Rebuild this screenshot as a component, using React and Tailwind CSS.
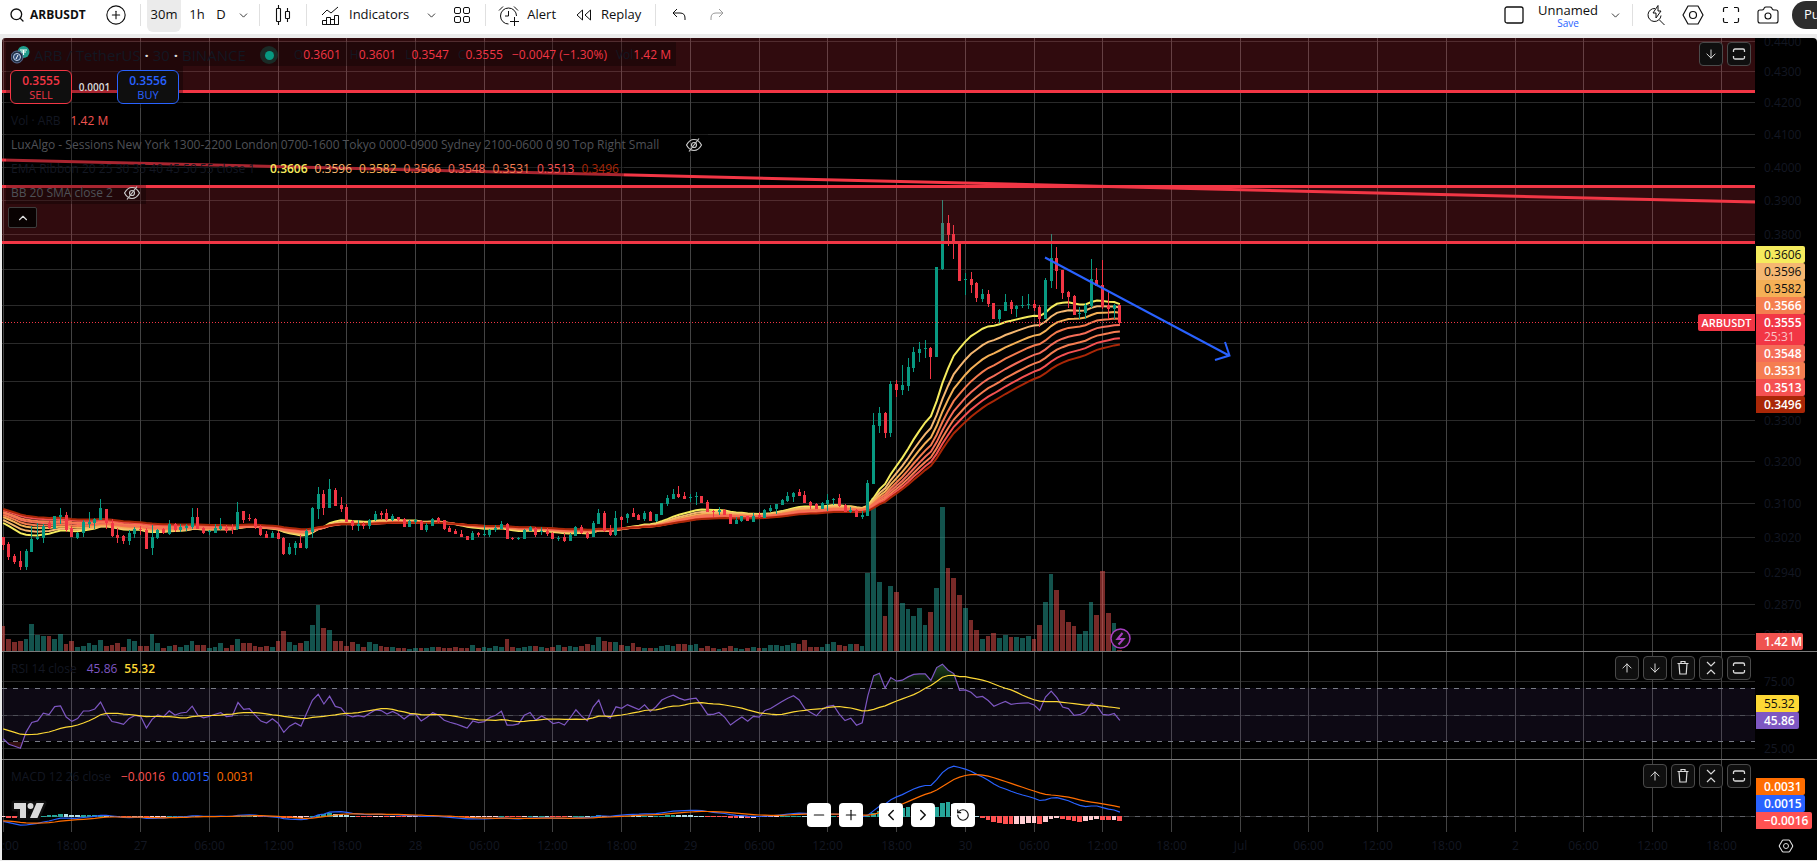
import React from "react";
import {
  Search,
  CirclePlus,
  ChevronDown,
  ChevronUp,
  ChevronLeft,
  ChevronRight,
  ArrowUp,
  ArrowDown,
  Minus,
  Plus,
  RotateCcw,
  Hexagon,
  Camera,
} from "lucide-react";

// one bar per 30m: [up, high, bodyTop, bodyBottom, low, volume], all in pixels
const BARS = [
  [0, 537, 537, 545, 550, 25], [0, 542, 544, 557, 560, 12], [0, 554, 556, 562, 564, 9], [0, 551, 561, 567, 570, 10],
  [1, 549, 551, 567, 570, 12], [1, 526, 539, 552, 552, 27], [1, 523, 537, 539, 540, 16], [1, 524, 526, 538, 543, 15],
  [0, 521, 523, 528, 529, 15], [1, 516, 516, 529, 529, 12], [1, 508, 515, 517, 524, 17], [0, 512, 515, 530, 532, 7],
  [0, 526, 528, 537, 537, 10], [1, 532, 533, 538, 539, 4], [1, 520, 522, 533, 537, 5], [1, 512, 522, 524, 528, 8],
  [1, 518, 519, 523, 529, 6], [1, 499, 508, 520, 520, 11], [0, 509, 509, 523, 529, 5], [0, 519, 523, 536, 537, 6],
  [0, 528, 535, 538, 543, 8], [0, 535, 536, 541, 544, 4], [1, 530, 533, 541, 545, 12], [1, 527, 529, 534, 538, 10],
  [0, 526, 529, 530, 535, 5], [0, 528, 530, 549, 549, 5], [1, 525, 537, 548, 555, 17], [1, 529, 530, 538, 539, 8],
  [0, 528, 529, 533, 534, 3], [1, 520, 524, 534, 535, 5], [0, 523, 524, 530, 532, 6], [1, 524, 527, 530, 532, 4],
  [1, 524, 526, 528, 531, 6], [1, 508, 517, 527, 529, 10], [0, 508, 517, 529, 529, 6], [0, 527, 528, 533, 534, 6],
  [1, 530, 531, 532, 535, 3], [1, 524, 528, 533, 533, 4], [1, 518, 526, 529, 530, 8], [0, 525, 528, 531, 533, 3],
  [0, 524, 529, 530, 534, 6], [1, 502, 512, 529, 530, 12], [0, 511, 511, 520, 523, 8], [0, 514, 518, 519, 521, 8],
  [0, 518, 519, 527, 529, 5], [0, 525, 527, 535, 536, 4], [0, 531, 534, 538, 538, 5], [1, 531, 533, 538, 538, 4],
  [0, 531, 533, 539, 539, 10], [0, 537, 538, 554, 555, 20], [1, 543, 547, 554, 555, 9], [1, 541, 543, 548, 555, 6],
  [0, 535, 543, 548, 548, 8], [1, 529, 531, 548, 549, 10], [1, 507, 508, 532, 538, 26], [1, 487, 494, 509, 519, 46],
  [0, 490, 494, 508, 515, 23], [1, 479, 489, 508, 508, 21], [0, 488, 490, 506, 506, 10], [0, 497, 505, 509, 512, 10],
  [0, 504, 507, 522, 522, 5], [0, 520, 521, 526, 530, 9], [1, 520, 524, 526, 531, 7], [0, 522, 524, 526, 529, 4],
  [1, 519, 520, 526, 529, 9], [1, 511, 514, 520, 521, 7], [0, 511, 513, 515, 520, 5], [0, 509, 513, 520, 521, 4],
  [1, 514, 516, 520, 521, 4], [0, 517, 517, 520, 521, 3], [0, 518, 519, 527, 527, 3], [1, 520, 521, 527, 527, 2],
  [1, 519, 520, 522, 524, 3], [0, 520, 521, 530, 530, 3], [1, 523, 525, 530, 532, 3], [1, 518, 519, 526, 526, 4],
  [0, 517, 518, 522, 523, 4], [0, 520, 520, 529, 530, 3], [0, 526, 528, 532, 532, 3], [0, 529, 531, 534, 534, 4],
  [0, 530, 534, 537, 537, 3], [0, 536, 536, 540, 540, 3], [1, 531, 533, 540, 540, 6], [0, 532, 533, 535, 537, 3],
  [1, 525, 534, 535, 536, 4], [1, 529, 530, 535, 537, 3], [1, 525, 528, 530, 532, 5], [1, 521, 524, 529, 529, 4],
  [0, 523, 524, 539, 539, 12], [0, 537, 538, 539, 540, 4], [1, 537, 538, 539, 540, 3], [1, 529, 530, 539, 539, 4],
  [1, 526, 527, 531, 531, 5], [0, 527, 528, 535, 537, 5], [1, 527, 531, 532, 535, 4], [0, 528, 531, 534, 536, 3],
  [0, 532, 533, 539, 539, 4], [1, 536, 538, 539, 541, 6], [0, 533, 537, 541, 542, 4], [1, 533, 535, 541, 541, 5],
  [1, 526, 527, 536, 536, 4], [0, 525, 527, 533, 534, 5], [0, 532, 533, 538, 539, 7], [1, 521, 523, 537, 537, 6],
  [1, 509, 513, 524, 524, 14], [0, 511, 513, 531, 532, 10], [0, 525, 530, 535, 536, 9], [1, 511, 518, 535, 536, 9],
  [0, 516, 517, 520, 529, 6], [1, 513, 514, 518, 523, 5], [0, 508, 513, 517, 517, 8], [0, 514, 515, 520, 520, 4],
  [1, 511, 513, 519, 521, 3], [0, 511, 512, 521, 521, 3], [1, 514, 514, 521, 522, 3], [1, 503, 503, 515, 515, 5],
  [1, 495, 498, 504, 506, 6], [1, 489, 494, 499, 499, 5], [0, 486, 494, 497, 498, 7], [0, 492, 496, 499, 499, 7],
  [1, 494, 497, 498, 502, 6], [1, 492, 496, 497, 505, 7], [0, 496, 496, 503, 503, 3], [0, 500, 502, 512, 512, 5],
  [0, 510, 511, 512, 517, 3], [1, 507, 510, 512, 515, 2], [0, 509, 510, 515, 515, 3], [0, 514, 514, 524, 524, 5],
  [1, 517, 520, 524, 524, 3], [1, 516, 516, 521, 522, 2], [0, 516, 516, 521, 521, 3], [1, 513, 516, 522, 522, 4],
  [0, 512, 515, 517, 518, 3], [1, 509, 510, 518, 518, 3], [1, 505, 508, 511, 512, 6], [1, 504, 504, 509, 514, 6],
  [1, 499, 500, 505, 505, 5], [1, 492, 496, 501, 502, 6], [1, 492, 493, 497, 502, 8], [0, 489, 492, 496, 496, 7],
  [0, 491, 495, 503, 503, 11], [0, 501, 502, 506, 509, 4], [0, 503, 504, 509, 509, 4], [1, 502, 503, 509, 509, 4],
  [1, 494, 500, 504, 511, 7], [1, 498, 499, 500, 505, 9], [0, 494, 498, 506, 507, 6], [0, 504, 505, 512, 512, 5],
  [1, 507, 510, 512, 513, 7], [0, 509, 510, 517, 517, 7], [1, 511, 515, 517, 519, 5], [1, 480, 483, 516, 516, 78],
  [1, 413, 425, 484, 484, 153], [1, 407, 413, 426, 433, 69], [0, 412, 413, 433, 438, 35], [1, 381, 384, 433, 437, 65],
  [0, 380, 384, 390, 397, 59], [1, 365, 385, 390, 395, 48], [1, 358, 367, 386, 391, 42], [1, 347, 352, 368, 372, 35],
  [1, 342, 349, 353, 362, 43], [1, 340, 348, 349, 358, 26], [0, 347, 348, 357, 379, 39], [1, 267, 267, 357, 357, 63],
  [1, 200, 223, 269, 270, 144], [0, 215, 223, 235, 246, 83], [0, 225, 234, 242, 259, 73], [0, 242, 243, 281, 281, 56],
  [1, 273, 279, 280, 295, 43], [0, 272, 279, 285, 293, 31], [0, 282, 283, 298, 302, 21], [1, 289, 294, 299, 302, 12],
  [0, 290, 294, 304, 307, 15], [0, 303, 303, 319, 319, 18], [1, 309, 310, 319, 323, 13], [1, 294, 302, 311, 311, 16],
  [0, 300, 302, 309, 314, 14], [1, 305, 306, 309, 317, 14], [1, 296, 305, 306, 308, 13], [1, 294, 304, 305, 309, 15],
  [0, 300, 304, 308, 311, 12], [0, 305, 307, 319, 327, 26], [1, 278, 280, 319, 319, 49], [1, 234, 258, 281, 288, 77],
  [0, 247, 258, 271, 289, 61], [0, 270, 270, 293, 299, 41], [0, 291, 292, 297, 308, 29], [0, 295, 296, 315, 315, 25],
  [1, 307, 313, 314, 319, 17], [1, 303, 305, 313, 319, 20], [1, 259, 279, 306, 308, 49], [0, 268, 280, 286, 286, 36],
  [0, 260, 285, 307, 309, 80], [0, 291, 305, 309, 319, 38], [1, 304, 305, 309, 319, 28], [0, 305, 305, 323, 324, 1],
];

const STEP = 5.7267;
const barX = (i) => 1.2 + i * STEP;
const pixelX = (i) => Math.floor(barX(i));

// the price scale is logarithmic
const toPrice = (y) => 0.31 * Math.exp((503.5 - y) / 1319);
const toY = (p) => 503.5 - 1319 * Math.log(p / 0.31);
const closes = BARS.map(([up, , top, bottom]) => toPrice(up ? top : bottom));

const ema = (values, period, seed) => {
  const k = 2 / (period + 1);
  let prev = seed;
  return values.map((v, i) => {
    if (i > 0) prev = v * k + prev * (1 - k);
    return prev;
  });
};

const points = (values, scale) =>
  values.map((v, i) => `${barX(i).toFixed(1)},${scale(v).toFixed(1)}`).join(" ");

const RIBBON = [
  { period: 20, seed: 523, color: "#f5eb5d" },
  { period: 25, seed: 520, color: "#f5b771" },
  { period: 30, seed: 517, color: "#f5b056" },
  { period: 35, seed: 515, color: "#f57b4e" },
  { period: 40, seed: 513, color: "#f56d58" },
  { period: 45, seed: 512, color: "#f57d51" },
  { period: 50, seed: 510, color: "#f55151" },
  { period: 55, seed: 509, color: "#aa2707" },
];
const ribbonLines = RIBBON.map((r) => ({
  color: r.color,
  points: points(ema(closes, r.period, toPrice(r.seed)), toY),
}));

// RSI 14 with Wilder smoothing
const rsi = (() => {
  let gain = 0.00045;
  let loss = 0.00095;
  return closes.map((c, i) => {
    if (i > 0) {
      const diff = c - closes[i - 1];
      gain = (gain * 13 + Math.max(diff, 0)) / 14;
      loss = (loss * 13 + Math.max(-diff, 0)) / 14;
    }
    return 100 - 100 / (1 + gain / loss);
  });
})();
const rsiHistory = [46, 45, 44, 43, 42, 41, 40, 40, 38, 37, 36, 35, 34];
const rsiMa = rsi.map((_, i) => {
  const all = [...rsiHistory, ...rsi];
  return all.slice(i, i + 14).reduce((a, b) => a + b, 0) / 14;
});
const rsiY = (v) => 688.5 + (70 - v) * 1.325;

const MACD_SCALE = 3050;
const fast = ema(closes, 12, 0.3046);
const slow = ema(closes, 26, 0.3062);
const macd = fast.map((v, i) => v - slow[i]);
const signal = ema(macd, 9, -0.0014);
const histogram = macd.map((v, i) => v - signal[i]);
const macdY = (v) => 816.5 - v * MACD_SCALE;

const histColor = (i) => {
  const v = histogram[i];
  const prev = i > 0 ? histogram[i - 1] : v;
  if (v >= 0) return v >= prev ? "#26a69a" : "#b2dfe8";
  return v < prev ? "#ff5252" : "#ffcdd2";
};

const GRID_Y = [41, 71, 102, 134, 167, 200, 234, 269, 305, 343, 381, 420, 461, 503, 537, 572, 604, 634];
const TIMES = [
  "12:00", "18:00", "27", "06:00", "12:00", "18:00", "28", "06:00", "12:00", "18:00", "29", "06:00", "12:00",
  "18:00", "30", "06:00", "12:00", "18:00", "Jul", "06:00", "12:00", "18:00", "2", "06:00", "12:00", "18:00",
];
const PRICE_TICKS = [
  [41, "0.4400"], [71, "0.4300"], [102, "0.4200"], [134, "0.4100"], [167, "0.4000"], [200, "0.3900"],
  [234, "0.3800"], [420, "0.3300"], [461, "0.3200"], [503, "0.3100"], [537, "0.3020"], [572, "0.2940"],
  [604, "0.2870"], [634, "0.2805"],
];

const gridX = (i) => pixelX(i * 12) + 0.5;

const VerticalGrid = () =>
  TIMES.map((_, i) => (
    <line key={i} x1={gridX(i)} x2={gridX(i)} y1="0" y2="900" stroke="#434343" />
  ));

const HLine = ({ y, stroke = "#2a2a2a", ...rest }) => (
  <line x1="0" x2="100%" y1={y + 0.5} y2={y + 0.5} stroke={stroke} {...rest} />
);

const Icon = ({ size = 18, className = "", children }) => (
  <svg
    width={size}
    height={size}
    viewBox={`0 0 ${size} ${size}`}
    fill="none"
    stroke="currentColor"
    className={`shrink-0 ${className}`}
    aria-hidden
  >
    {children}
  </svg>
);

const Divider = ({ className = "" }) => (
  <span className={`h-[22px] w-px shrink-0 bg-[#e0e0e0] ${className}`} />
);

const ToolButton = ({ label, className = "", children }) => (
  <button
    type="button"
    aria-label={label}
    className={`flex shrink-0 items-center justify-center ${className}`}
  >
    {children}
  </button>
);

const Toolbar = () => (
  <header className="flex h-[34px] items-center overflow-hidden bg-white pb-1 text-[13px] text-[#0f0f0f]">
    <button type="button" className="ml-[9px] flex items-center gap-[5px] font-bold">
      <Search size={16} strokeWidth={2} />
      <span className="w-[58px] text-left text-xs whitespace-nowrap">ARBUSDT</span>
    </button>
    <ToolButton label="Compare" className="ml-4 w-6">
      <CirclePlus size={22} strokeWidth={1.2} />
    </ToolButton>
    <Divider className="ml-3" />
    <button type="button" className="ml-1.5 h-8 w-[34px] self-start rounded-b-md bg-[#ebebeb] pb-0.5 text-center">
      30m
    </button>
    <button type="button" className="w-8 text-center">1h</button>
    <button type="button" className="w-4 text-center">D</button>
    <ToolButton label="Intervals" className="ml-1.5 w-4">
      <ChevronDown size={13} strokeWidth={1.5} />
    </ToolButton>
    <Divider className="ml-2" />
    <ToolButton label="Candles" className="ml-[15px] w-4">
      <Icon size={20}>
        <path d="M5.5 0v3M5.5 17v3M14.5 3v3M14.5 14v3" strokeWidth="1.1" />
        <rect x="3.5" y="3.5" width="4" height="13" rx="0.5" strokeWidth="1.1" />
        <rect x="12.5" y="6.5" width="4" height="7" rx="0.5" strokeWidth="1.1" />
      </Icon>
    </ToolButton>
    <Divider className="ml-[15px]" />
    <button type="button" className="ml-3.5 flex items-center gap-[9px]">
      <Icon size={19}>
        <path d="M1 9l5-5 4 3 7-6" />
        <path d="M1.5 18.5v-4h4v4zM5.5 18.5v-7h4v7M9.5 18.5v-5h4M13.5 18.5v-9h4v9zM1.5 18.5h16" />
      </Icon>
      Indicators
    </button>
    <ToolButton label="Favorite indicators" className="ml-3.5 w-4">
      <ChevronDown size={13} strokeWidth={1.5} />
    </ToolButton>
    <ToolButton label="Indicator templates" className="ml-3.5">
      <Icon size={18}>
        <rect x="1.5" y="1.5" width="6" height="6" rx="1.5" />
        <rect x="10.5" y="1.5" width="6" height="6" rx="1.5" />
        <rect x="1.5" y="10.5" width="6" height="6" rx="1.5" />
        <rect x="10.5" y="10.5" width="6" height="6" rx="1.5" />
      </Icon>
    </ToolButton>
    <Divider className="ml-3.5" />
    <button type="button" className="ml-3 flex items-center gap-2">
      <Icon size={21}>
        <path d="M18.5 11a8 8 0 1 0-8 8M1 5.5L5 1.5M16 1.5l4 4M10.5 6v5H7M16.5 12v9M12 16.5h9" />
      </Icon>
      Alert
    </button>
    <button type="button" className="ml-5 flex items-center gap-[9px]">
      <Icon size={16}>
        <path d="M6.5 3v10L1 8zM14.5 3v10L9 8z" strokeLinejoin="round" />
      </Icon>
      Replay
    </button>
    <Divider className="ml-3.5" />
    <ToolButton label="Undo" className="ml-4">
      <Icon size={14}>
        <path d="M5 1L1 5l4 4M1 5h7q5 0 5 5v2" />
      </Icon>
    </ToolButton>
    <ToolButton label="Redo" className="ml-6 text-[#9a9a9a]">
      <Icon size={14}>
        <path d="M9 1l4 4-4 4M13 5H6Q1 5 1 10v2" />
      </Icon>
    </ToolButton>

    <div className="ml-auto flex items-center">
      <ToolButton label="Layout setup">
        <Icon size={20}>
          <rect x="1" y="2" width="18" height="16" rx="2" strokeWidth="1.3" />
        </Icon>
      </ToolButton>
      <button type="button" className="ml-2 flex w-[72px] flex-col items-center">
        <span className="leading-4">Unnamed</span>
        <span className="text-[10px] leading-[10px] text-[#2962ff]">Save</span>
      </button>
      <ToolButton label="Manage layouts" className="ml-[3px] w-4">
        <ChevronDown size={13} strokeWidth={1.5} />
      </ToolButton>
      <Divider className="ml-[9px]" />
      <ToolButton label="Quick search" className="ml-3">
        <Icon size={21}>
          <path d="M10 3.500a6.500 6.500 0 1 0 6 7M14.500 15l5 5" />
          <path d="M13 .5L8 8h3v5l5-7h-3z" strokeLinejoin="round" />
        </Icon>
      </ToolButton>
      <ToolButton label="Settings" className="ml-4">
        <Icon size={22}>
          <path d="M6 2h10l5 9-5 9H6l-5-9z" strokeLinejoin="round" strokeWidth="1.2" />
          <circle cx="11" cy="11" r="3.5" strokeWidth="1.2" />
        </Icon>
      </ToolButton>
      <ToolButton label="Fullscreen mode" className="ml-[18px]">
        <Icon size={18}>
          <path d="M1.5 6V3q0-1.5 1.5-1.5h3M12 1.5h3q1.5 0 1.5 1.5v3M16.5 12v3q0 1.5-1.5 1.5h-3M6 16.5H3q-1.500 0-1.5-1.5v-3" strokeWidth="1.2" />
        </Icon>
      </ToolButton>
      <ToolButton label="Take a snapshot" className="ml-4">
        <Camera size={24} strokeWidth={1.1} />
      </ToolButton>
      <div className="ml-3 w-[25px] overflow-hidden">
        <button type="button" className="h-7 w-20 rounded-full bg-[#2e2e2e] pl-3 text-left text-white">
          Publish
        </button>
      </div>
    </div>
  </header>
);

const paneIcons = {
  up: ["Move pane up", <ArrowUp size={14} strokeWidth={1.7} />],
  down: ["Move pane down", <ArrowDown size={14} strokeWidth={1.7} />],
  remove: [
    "Delete pane",
    <Icon size={14}>
      <path d="M1.5 2.5h11M5 2.5v-2h4v2M3 2.5l.8 10.500h6.400L11 2.5" strokeWidth="1.2" />
    </Icon>,
  ],
  collapse: [
    "Collapse pane",
    <Icon size={14}>
      <path d="M3 1l4 4 4-4M3 13l4-4 4 4" strokeWidth="1.2" />
    </Icon>,
  ],
  maximize: [
    "Maximize pane",
    <Icon size={14}>
      <path d="M1.5 5V3.500q0-1.500 1.500-1.500h8q1.500 0 1.500 1.500V5M1.5 9v1.500Q1.500 12 3 12h8q1.500 0 1.500-1.500V9" strokeWidth="1.3" />
    </Icon>,
  ],
};

const PaneControls = ({ items }) => (
  <div className="absolute top-1 right-1 flex gap-1">
    {items.map((key) => (
      <button
        key={key}
        type="button"
        aria-label={paneIcons[key][0]}
        className="flex size-6 items-center justify-center rounded-sm border border-[#4a4a4a] bg-[#0f0f0f] text-[#dbdbdb]"
      >
        {paneIcons[key][1]}
      </button>
    ))}
  </div>
);

const EyeOff = () => (
  <svg width="18" height="14" viewBox="0 0 18 14" fill="none" stroke="#c8c8c8" strokeWidth="1.2">
    <path d="M1.5 7Q4.5 1.5 9 1.5T16.5 7Q13.5 12.5 9 12.5T1.5 7zM14 .5L4 13.5" />
    <circle cx="9" cy="7" r="2.5" />
  </svg>
);

const PriceTag = ({ bg, color = "text-white font-semibold", width = "w-[49px]", children }) => (
  <div className={`h-[17px] rounded-r-xs pl-2 text-xs leading-[17px] ${color} ${width}`} style={{ background: bg }}>
    {children}
  </div>
);

const Axis = ({ top, ticks, children }) => (
  <div className="relative w-[62px] shrink-0">
    <svg className="absolute inset-0 h-full w-full text-xs" fill="#131722">
      {ticks.map(([y, text]) => (
        <text key={text} x="9" y={y - top + 5}>
          {text}
        </text>
      ))}
    </svg>
    {children}
  </div>
);

const Legend = ({ name, children }) => (
  <div className="absolute top-1 left-1 flex h-6 items-center gap-[7px] pt-0.5 pl-[5px] text-xs text-[#131722]">
    <span className="mr-[3px]">{name}</span>
    {children}
  </div>
);

const legendRow = "flex h-6 w-fit items-center bg-black/30 px-[5px] pt-0.5 text-xs whitespace-nowrap";

const PricePane = () => (
  <section className="flex h-[613px]">
    <div className="relative min-w-0 flex-1 overflow-hidden">
      <svg className="block h-full w-full">
        <g transform="translate(0 -38)">
          {GRID_Y.map((y) => (
            <HLine key={y} y={y} />
          ))}
          <VerticalGrid />
          <g shapeRendering="crispEdges">
            {BARS.map(([up, , , , , vol], i) => (
              <rect
                key={i}
                x={pixelX(i) - 2}
                y={651 - vol}
                width={pixelX(i + 1) - pixelX(i) - 1}
                height={vol}
                fill={up ? "#26a69a" : "#ef5350"}
                fillOpacity="0.5"
              />
            ))}
          </g>
          {ribbonLines.map((line) => (
            <polyline key={line.color} points={line.points} fill="none" stroke={line.color} strokeWidth="2" />
          ))}
          <g shapeRendering="crispEdges">
            {BARS.map(([up, high, top, bottom, low], i) => (
              <g key={i} fill={up ? "#089981" : "#f23645"}>
                <rect x={pixelX(i)} y={high} width="1" height={Math.max(low - high, 1)} />
                <rect x={pixelX(i) - 1} y={top} width="3" height={Math.max(bottom - top, 1)} />
              </g>
            ))}
          </g>
          <rect x="0" y="38" width="100%" height="53" fill="#f23645" fillOpacity="0.2" />
          <rect x="0" y="186" width="100%" height="56" fill="#f23645" fillOpacity="0.2" />
          <g strokeWidth="3">
            <HLine y={91} stroke="#f23645" />
            <HLine y={186} stroke="#f23645" />
            <HLine y={242} stroke="#f23645" />
            <path d="M0 160L1753 202" stroke="#f23645" />
          </g>
          <HLine y={322} stroke="#f23645" strokeDasharray="1 2" />
          <path
            d="M1043 257.5L1227 355.5M1213 360l14.5-4.5L1223 342"
            stroke="#2962ff"
            strokeWidth="2"
            fill="none"
          />
          <g stroke="#a83fc0" strokeWidth="1.5">
            <circle cx="1118.5" cy="638.5" r="9.5" fill="#0f0f0f" />
            <path d="M1120.5 633l-5 6h6l-5 5.5" fill="none" strokeWidth="2" />
          </g>
        </g>
      </svg>

      <div className="absolute top-1 left-1">
        <div className={legendRow}>
          <svg width="20" height="20" viewBox="0 0 20 20" className="mr-[3px]">
            <circle cx="12.5" cy="7" r="6" fill="#1f9c8b" />
            <path d="M9 5h7M12.5 5v5M10 7h5" stroke="#fff" strokeWidth="1.2" />
            <circle cx="6" cy="12" r="6" fill="#213147" stroke="#5b6c92" />
            <circle cx="6" cy="12" r="3.5" fill="#2d4a75" stroke="#c4d4ee" />
            <path d="M5 14l2-4" stroke="#fff" />
          </svg>
          <span className="w-[211px] text-[15px] text-[#131722]">
            ARB / TetherUS <b className="text-[#dbdbdb]">·</b> 30 <b className="text-[#dbdbdb]">·</b> BINANCE
          </span>
          <span className="mr-4 ml-[15px] flex size-[18px] items-center justify-center rounded-full bg-[#089981]/25">
            <span className="size-[9px] rounded-full bg-[#089981]" />
          </span>
          <span className="flex gap-[9px] text-[#131722]">
            <span>O<span className="text-[#f23645]">0.3601</span></span>
            <span>H<span className="text-[#f23645]">0.3601</span></span>
            <span>L<span className="text-[#f23645]">0.3547</span></span>
            <span>C<span className="text-[#f23645]">0.3555</span></span>
            <span className="text-[#f23645]">−0.0047 (−1.30%)</span>
            <span>Vol<span className="text-[#f23645]">1.42 M</span></span>
          </span>
        </div>
        <div className="flex h-[42px] w-[177px] items-center bg-black/30 px-1">
          <button type="button" className="flex h-[34px] w-[62px] flex-col items-center justify-center rounded-md border border-[#f23645] bg-[#0f0f0f] text-[#f23645]">
            <span className="text-xs leading-[15px] font-semibold">0.3555</span>
            <span className="text-[11px] leading-[13px]">SELL</span>
          </button>
          <span className="w-[45px] text-center text-[10px] font-semibold text-[#dbdbdb]">0.0001</span>
          <button type="button" className="flex h-[34px] w-[62px] flex-col items-center justify-center rounded-md border border-[#2962ff] bg-[#0f0f0f] text-[#2962ff]">
            <span className="text-xs leading-[15px] font-semibold">0.3556</span>
            <span className="text-[11px] leading-[13px]">BUY</span>
          </button>
        </div>
        <div className={legendRow}>
          <span className="mr-2.5 text-[#131722]">Vol · ARB</span>
          <span className="text-[#ef5350]">1.42 M</span>
        </div>
        <div className={legendRow}>
          <span className="mr-2.5 w-[664px] text-[#4f5156]">
            LuxAlgo - Sessions New York 1300-2200 London 0700-1600 Tokyo 0000-0900 Sydney 2100-0600 0 90 Top Right Small
          </span>
          <EyeOff />
        </div>
        <div className={legendRow}>
          <span className="w-[259px] text-[#131722]">EMA Ribbon 20 25 30 35 40 45 50 55 close 1</span>
          <span className="flex gap-[7px]">
            {["0.3606", "0.3596", "0.3582", "0.3566", "0.3548", "0.3531", "0.3513", "0.3496"].map((v, i) => (
              <span key={v} className={i === 0 ? "font-semibold" : ""} style={{ color: RIBBON[i].color }}>
                {v}
              </span>
            ))}
          </span>
        </div>
        <div className={legendRow}>
          <span className="mr-2.5 text-[#4f5156]">BB 20 SMA close 2</span>
          <EyeOff />
        </div>
        <button
          type="button"
          aria-label="Hide indicators legend"
          className="mt-[3px] ml-0.5 flex h-[21px] w-[29px] items-center justify-center rounded-xs border border-[#3d3d3d] bg-black/80 text-[#dbdbdb]"
        >
          <ChevronUp size={14} strokeWidth={2} />
        </button>
      </div>

      <PaneControls items={["down", "maximize"]} />
      <div className="absolute top-[276px] right-0 h-[17px] w-[57px] rounded-l-xs bg-[#f23645] text-center text-[11px] leading-[17px] font-semibold text-white">
        ARBUSDT
      </div>
    </div>

    <Axis top={38} ticks={PRICE_TICKS}>
      <div className="absolute top-[208px] left-px">
        <PriceTag bg="#f5eb5d" color="text-[#0f0f0f]">0.3606</PriceTag>
        <PriceTag bg="#f5b771" color="text-[#0f0f0f]">0.3596</PriceTag>
        <PriceTag bg="#f5b056" color="text-[#0f0f0f]">0.3582</PriceTag>
        <PriceTag bg="#f57f4f">0.3566</PriceTag>
        <div className="h-[31px] w-[49px] rounded-r-xs bg-[#f23645] pl-2 text-xs text-white">
          <div className="leading-[17px] font-semibold">0.3555</div>
          <div className="leading-3 text-[#fbc3c7]">25:31</div>
        </div>
        <PriceTag bg="#f56d58">0.3548</PriceTag>
        <PriceTag bg="#f57d51">0.3531</PriceTag>
        <PriceTag bg="#f55151">0.3513</PriceTag>
        <PriceTag bg="#aa2707">0.3496</PriceTag>
      </div>
      <div className="absolute bottom-px left-px">
        <PriceTag bg="#ef5350" width="w-[47px]">1.42 M</PriceTag>
      </div>
    </Axis>
  </section>
);

const RsiPane = () => (
  <section className="flex h-[108px] border-t border-[#7b7b7b]">
    <div className="relative min-w-0 flex-1 overflow-hidden">
      <svg className="block h-full w-full">
        <defs>
          <clipPath id="overbought">
            <rect x="0" y="652" width="2000" height="36" />
          </clipPath>
          <clipPath id="oversold">
            <rect x="0" y="742" width="2000" height="20" />
          </clipPath>
          <linearGradient id="overboughtFill" x1="0" y1="652" x2="0" y2="688" gradientUnits="userSpaceOnUse">
            <stop offset="0" stopColor="#4caf50" stopOpacity="0.6" />
            <stop offset="1" stopColor="#4caf50" stopOpacity="0" />
          </linearGradient>
        </defs>
        <g transform="translate(0 -652)">
          <HLine y={681} />
          <HLine y={715} />
          <HLine y={748} />
          <VerticalGrid />
          <rect x="0" y="688" width="100%" height="53" fill="#7e57c2" fillOpacity="0.1" />
          <HLine y={688} stroke="#787b86" strokeDasharray="5 6" />
          <HLine y={715} stroke="#4d4f57" strokeDasharray="5 6" />
          <HLine y={741} stroke="#787b86" strokeDasharray="5 6" />
          <polygon
            points={`${barX(0)},688.5 ${points(rsi, rsiY)} ${barX(195)},688.5`}
            fill="url(#overboughtFill)"
            clipPath="url(#overbought)"
          />
          <polygon
            points={`${barX(0)},741.5 ${points(rsi, rsiY)} ${barX(195)},741.5`}
            fill="#ff5252"
            fillOpacity="0.2"
            clipPath="url(#oversold)"
          />
          <polyline points={points(rsi, rsiY)} fill="none" stroke="#7e57c2" strokeWidth="1.2" />
          <polyline points={points(rsiMa, rsiY)} fill="none" stroke="#fdd835" strokeWidth="1.2" />
        </g>
      </svg>
      <Legend name="RSI 14 close">
        <span className="text-[#7e57c2]">45.86</span>
        <span className="font-semibold text-[#fdd835]">55.32</span>
      </Legend>
      <PaneControls items={["up", "down", "remove", "collapse", "maximize"]} />
    </div>
    <Axis top={652} ticks={[[681, "75.00"], [748, "25.00"]]}>
      <div className="absolute top-[43px] left-px">
        <PriceTag bg="#fdd835" color="text-[#0f0f0f]" width="w-[43px]">55.32</PriceTag>
        <PriceTag bg="#7e57c2" width="w-[43px]">45.86</PriceTag>
      </div>
    </Axis>
  </section>
);

const NavButton = ({ label, className = "", children }) => (
  <button
    type="button"
    aria-label={label}
    className={`flex size-6 items-center justify-center rounded-sm bg-white ${className}`}
  >
    {children}
  </button>
);

const MacdPane = () => (
  <section className="flex h-[73px] border-t border-[#7b7b7b]">
    <div className="relative min-w-0 flex-1 overflow-hidden">
      <svg className="block h-full w-full">
        <g transform="translate(0 -760)">
          <VerticalGrid />
          <HLine y={816} />
          <HLine y={816} stroke="#5d5f66" strokeDasharray="5 6" />
          <g shapeRendering="crispEdges">
            {histogram.map((v, i) => {
              const height = Math.max(Math.round(Math.abs(v) * MACD_SCALE), 1);
              return (
                <rect
                  key={i}
                  x={pixelX(i) - 2}
                  y={v >= 0 ? 817 - height : 816}
                  width={pixelX(i + 1) - pixelX(i) - 1}
                  height={height}
                  fill={histColor(i)}
                />
              );
            })}
          </g>
          <polyline points={points(macd, macdY)} fill="none" stroke="#2962ff" strokeWidth="1.2" />
          <polyline points={points(signal, macdY)} fill="none" stroke="#ff6d00" strokeWidth="1.2" />
        </g>
      </svg>
      <Legend name="MACD 12 26 close">
        <span className="text-[#ff5252]">−0.0016</span>
        <span className="text-[#2962ff]">0.0015</span>
        <span className="text-[#ff6d00]">0.0031</span>
      </Legend>
      <PaneControls items={["up", "remove", "collapse", "maximize"]} />
      <svg
        className="absolute bottom-3 left-[9px]"
        width="38"
        height="20"
        viewBox="0 0 38 20"
        fill="#dbdbdb"
        stroke="#0f0f0f"
        strokeWidth="5"
        paintOrder="stroke"
        strokeLinejoin="round"
      >
        <path d="M3 3h12v15H9V9H3zM19.5 3a3 3 0 1 1 0 6 3 3 0 0 1 0-6zM25.5 3H33l-6.500 15H19z" />
      </svg>
      <div className="absolute inset-x-0 bottom-[5px] flex justify-center pl-[25px] text-[#0f0f0f]">
        <NavButton label="Zoom out"><Minus size={16} strokeWidth={1.8} /></NavButton>
        <NavButton label="Zoom in" className="ml-2"><Plus size={16} strokeWidth={1.8} /></NavButton>
        <NavButton label="Scroll to the left" className="ml-4"><ChevronLeft size={18} strokeWidth={2} /></NavButton>
        <NavButton label="Scroll to the right" className="ml-2"><ChevronRight size={18} strokeWidth={2} /></NavButton>
        <NavButton label="Reset chart view" className="ml-4"><RotateCcw size={14} strokeWidth={2} /></NavButton>
      </div>
    </div>
    <Axis top={760} ticks={[]}>
      <div className="absolute bottom-[3px] left-px">
        <PriceTag bg="#ff6d00">0.0031</PriceTag>
        <PriceTag bg="#2962ff">0.0015</PriceTag>
        <PriceTag bg="#ff5252" width="w-14">−0.0016</PriceTag>
      </div>
    </Axis>
  </section>
);

const TimeAxis = () => (
  <footer className="flex h-7">
    <svg className="h-full min-w-0 flex-1 text-xs" fill="#131722" textAnchor="middle">
      {TIMES.map((t, i) => (
        <text key={i} x={gridX(i)} y="18">
          {t}
        </text>
      ))}
    </svg>
    <div className="flex w-[62px] shrink-0 items-center justify-center">
      <button type="button" aria-label="Time axis settings" className="relative text-[#dbdbdb]">
        <Hexagon size={16} strokeWidth={1.7} className="rotate-90" />
        <span className="absolute top-1/2 left-1/2 size-1.5 -translate-x-1/2 -translate-y-1/2 rounded-full border border-[#dbdbdb]" />
      </button>
    </div>
  </footer>
);

const App = () => (
  <div className="min-h-screen bg-[#ebebeb] font-['Open_Sans','Noto_Sans',sans-serif]">
    <Toolbar />
    <main className="mt-1 ml-0.5 overflow-hidden rounded-t-sm bg-black">
      <PricePane />
      <RsiPane />
      <MacdPane />
      <TimeAxis />
    </main>
  </div>
);

export default App;
